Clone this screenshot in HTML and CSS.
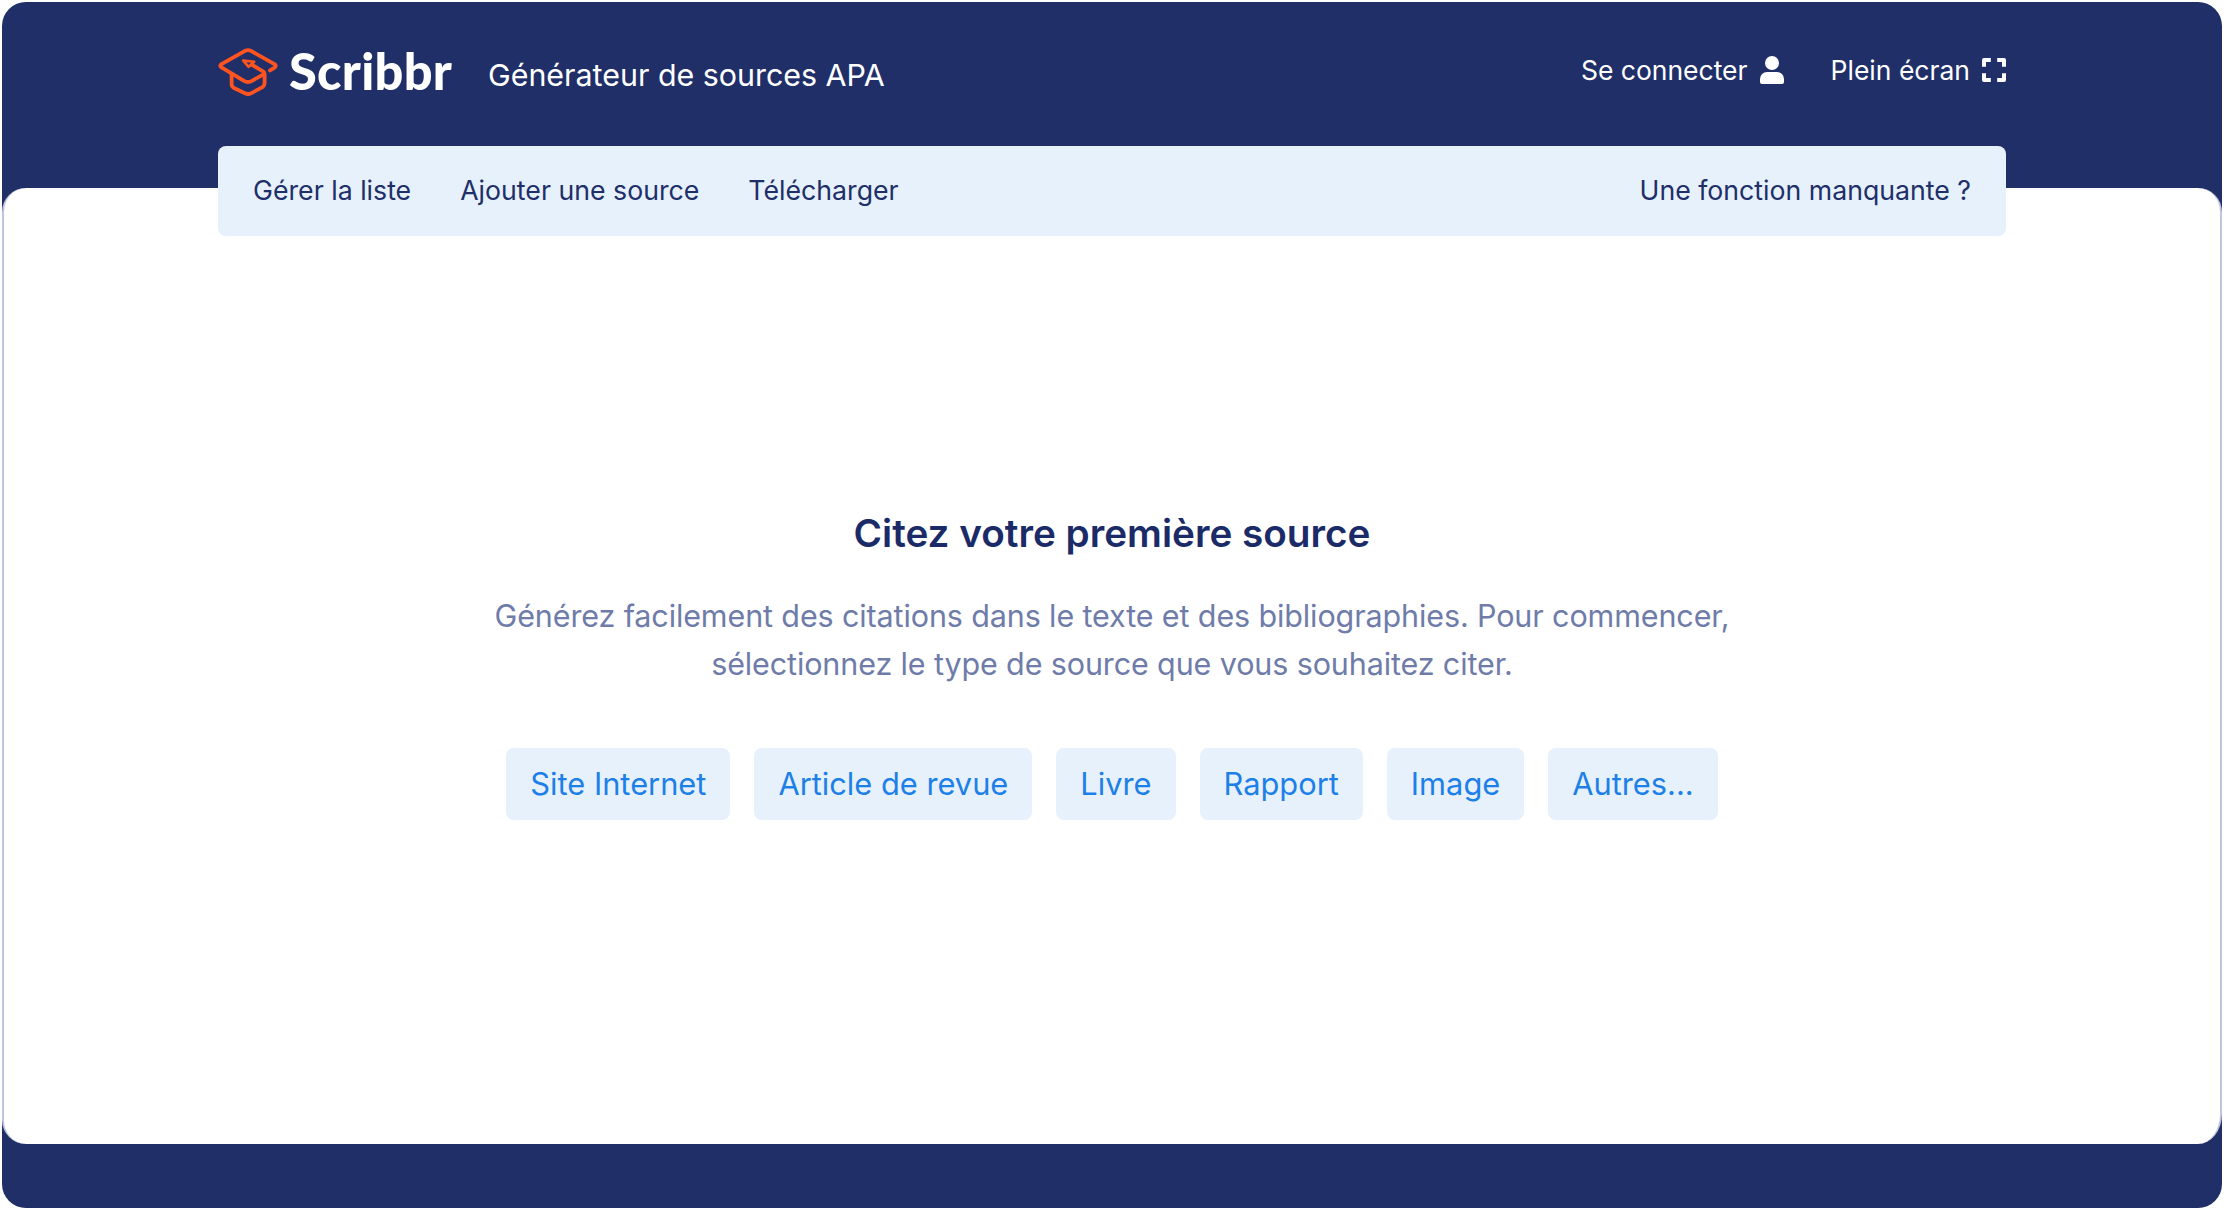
FILE: index.html
```html
<!DOCTYPE html>
<html lang="fr">
<head>
    <meta charset="UTF-8">
    <meta name="viewport" content="width=device-width, initial-scale=1.0">
    <title>Scribbr - Générateur de sources APA</title>
    <link rel="stylesheet" href="styles.css">
</head>
<body>

    <div class="app">
        <header class="header">
            <a class="logo" href="#">
                <svg class="logo-icon" viewBox="0 0 60 48" fill="none" stroke="currentColor" stroke-width="3.8" stroke-linecap="round" stroke-linejoin="round">
                    <path d="M52 22.4 L56.5 19.6 Q59 17.8 56.5 16.2 L33 2.9 Q30 1.2 27 2.9 L3.5 16.2 Q1 17.8 3.5 19.4 L26 32.8 Q30 35.2 34 32.8 L45 26.6 Q47.3 25 45.4 23.6 L34 16.8"/>
                    <path stroke-width="2.6" d="M25.2 12.6 L36.2 13.8 L30.6 18.8 Z"/>
                    <path d="M13.6 26 V36 Q13.6 38.6 16 40 L27 45.3 Q30 46.7 33 45.3 L44.5 39.1 Q46.6 37.6 46.6 35.2 V26"/>
                </svg>
                <span class="logo-text">Scribbr</span>
            </a>
            <h1>Générateur de sources APA</h1>
            <div class="header-links">
                <a href="#">Se connecter
                    <svg class="user-icon" viewBox="0 0 24 28" fill="currentColor">
                        <circle cx="12" cy="7" r="7"/>
                        <path d="M7 16 H17 A7 7 0 0 1 24 23 V26 A2 2 0 0 1 22 28 H2 A2 2 0 0 1 0 26 V23 A7 7 0 0 1 7 16 Z"/>
                    </svg>
                </a>
                <a href="#">Plein écran
                    <svg class="expand-icon" viewBox="0 0 24 24" fill="none" stroke="currentColor" stroke-width="4" stroke-linejoin="round">
                        <path d="M2 8.8 V2 H8.8 M15.2 2 H22 V8.8 M22 15.2 V22 H15.2 M8.8 22 H2 V15.2"/>
                    </svg>
                </a>
            </div>
        </header>

        <main>
            <nav class="toolbar">
                <a href="#">Gérer la liste</a>
                <a href="#">Ajouter une source</a>
                <a href="#">Télécharger</a>
                <a class="feedback" href="#">Une fonction manquante ?</a>
            </nav>

            <section class="first-source">
                <h2>Citez votre première source</h2>
                <p>Générez facilement des citations dans le texte et des bibliographies. Pour commencer, sélectionnez le type de source que vous souhaitez citer.</p>
                <div class="source-types">
                    <button>Site Internet</button>
                    <button>Article de revue</button>
                    <button>Livre</button>
                    <button>Rapport</button>
                    <button>Image</button>
                    <button>Autres...</button>
                </div>
            </section>
        </main>
    </div>

</body>
</html>
```
FILE: styles.css
```css
* {
    box-sizing: border-box;
}

body {
    font-family: Inter, Arial, sans-serif;
    margin: 0;
    padding: 2px;
    background: #fff;
    color: #202f68;
}

a {
    color: inherit;
    text-decoration: none;
}

.app {
    width: 2220px;
    height: 1206px;
    padding-bottom: 64px;
    display: flex;
    flex-direction: column;
    background: #202f68;
    border-radius: 24px;
}

/* Header */
.header {
    width: 1788px;
    height: 186px;
    margin: 0 auto;
    padding: 26px 0 72px;
    display: flex;
    align-items: center;
    color: #fff;
}

.logo {
    display: flex;
    align-items: center;
    gap: 11px;
    width: 270px;
}

.logo-icon {
    width: 60px;
    height: 48px;
    color: #ff5420;
}

.logo-text {
    font-family: Lato, sans-serif;
    font-size: 50.5px;
    font-weight: 900;
    line-height: 60px;
    letter-spacing: 0.3px;
    margin-bottom: 2px;
}

.header h1 {
    margin: 5px 0 0;
    font-size: 30.4px;
    font-weight: 400;
}

.header-links {
    display: flex;
    gap: 47px;
    margin-left: auto;
    margin-bottom: 4px;
    font-size: 26.5px;
}

.header-links a {
    display: flex;
    align-items: center;
    gap: 12px;
}

.user-icon {
    width: 24px;
    height: 28px;
}

.expand-icon {
    width: 24px;
    height: 24px;
}

/* White panel */
main {
    flex: 1;
    background: #fff;
    border: solid #bec4dd;
    border-width: 0 2px;
    border-radius: 24px 24px 24px 24px / 24px 24px 30px 24px;
}

.toolbar {
    width: 1788px;
    height: 90px;
    margin: -42px auto 0;
    padding: 0 35px 2px;
    display: flex;
    align-items: center;
    gap: 49px;
    background: #e7f1fc;
    border-radius: 8px;
    font-size: 26.7px;
}

.feedback {
    margin-left: auto;
}

.first-source {
    width: 1280px;
    margin: 273px auto 0;
    text-align: center;
}

.first-source h2 {
    margin: 0 0 35px;
    font-size: 38.7px;
    font-weight: 600;
    line-height: 48px;
    color: #1b2b68;
}

.first-source p {
    margin: 0 0 60px;
    font-size: 30.5px;
    line-height: 48px;
    letter-spacing: -0.12px;
    color: #6f7ca9;
}

.source-types {
    display: flex;
    justify-content: center;
    gap: 24px;
}

button {
    background: #e7f1fc;
    color: #1d80e8;
    border: none;
    border-radius: 8px;
    padding: 12px 24px;
    font-family: inherit;
    font-size: 30.8px;
    line-height: 48px;
    cursor: pointer;
}
```
